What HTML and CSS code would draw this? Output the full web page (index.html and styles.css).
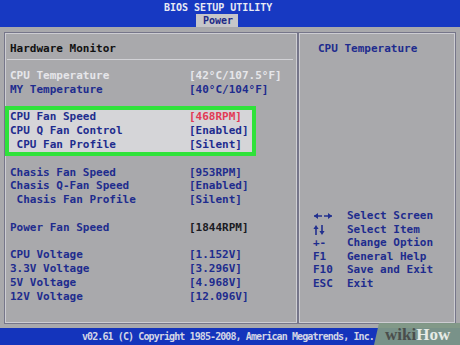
FILE: index.html
```html
<!DOCTYPE html>
<html>
<head>
<meta charset="utf-8">
<link rel="stylesheet" href="styles.css">
</head>
<body>
<div class="screen">
  <header class="topbar">
    <div class="title">BIOS SETUP UTILITY</div>
    <div class="tabs"><span class="tab">Power</span></div>
  </header>
  <main class="frame">
    <section class="panel left">
      <div class="heading">Hardware Monitor</div>
      <div class="sep"></div>
      <div class="row disabled"><span>CPU Temperature</span><span>[42°C/107.5°F]</span></div>
      <div class="row"><span>MY Temperature</span><span>[40°C/104°F]</span></div>
      <div class="blank short"></div>
      <div class="box">
        <div class="row sel"><span>CPU Fan Speed</span><span class="red">[468RPM]</span></div>
        <div class="row"><span>CPU Q Fan Control</span><span>[Enabled]</span></div>
        <div class="row"><span class="indent">CPU Fan Profile</span><span>[Silent]</span></div>
      </div>
      <div class="blank short"></div>
      <div class="row"><span>Chasis Fan Speed</span><span>[953RPM]</span></div>
      <div class="row"><span>Chasis Q-Fan Speed</span><span>[Enabled]</span></div>
      <div class="row"><span class="indent">Chasis Fan Profile</span><span>[Silent]</span></div>
      <div class="blank"></div>
      <div class="row"><span>Power Fan Speed</span><span class="dark">[1844RPM]</span></div>
      <div class="blank"></div>
      <div class="row"><span>CPU Voltage</span><span>[1.152V]</span></div>
      <div class="row"><span>3.3V Voltage</span><span>[3.296V]</span></div>
      <div class="row"><span>5V Voltage</span><span>[4.968V]</span></div>
      <div class="row"><span>12V Voltage</span><span>[12.096V]</span></div>
    </section>
    <aside class="panel right">
      <div class="help-title">CPU Temperature</div>
      <div class="keys">
        <div class="key-row"><span class="key"><svg width="20" height="8" viewBox="0 0 20 8"><path d="M1 4h8M11 4h8" stroke="#22308f" stroke-width="1.6"/><path d="M1 4l4-3v6z M19 4l-4-3v6z" fill="#22308f"/></svg></span><span>Select Screen</span></div>
        <div class="key-row"><span class="key"><svg width="12" height="10" viewBox="0 0 12 10"><path d="M3 2v8M9 0v8" stroke="#22308f" stroke-width="1.6"/><path d="M3 0l-2.6 4h5.2z M9 10l-2.6-4h5.2z" fill="#22308f"/></svg></span><span>Select Item</span></div>
        <div class="key-row"><span class="key">+-</span><span>Change Option</span></div>
        <div class="key-row"><span class="key">F1</span><span>General Help</span></div>
        <div class="key-row"><span class="key">F10</span><span>Save and Exit</span></div>
        <div class="key-row"><span class="key">ESC</span><span>Exit</span></div>
      </div>
    </aside>
  </main>
  <footer class="footer">v02.61 (C) Copyright 1985-2008, American Megatrends, Inc.</footer>
  <div class="wikihow"><span class="wiki">wiki</span><span class="how">How</span></div>
</div>
</body>
</html>
```
FILE: styles.css
```css
body {
  margin: 0;
  width: 460px;
  height: 345px;
  overflow: hidden;
  background: #a9a9ac;
  font-family: "DejaVu Sans Mono", "Liberation Mono", monospace;
  font-weight: bold;
  font-size: 11px;
}

.screen {
  position: relative;
  height: 345px;
  display: flex;
  flex-direction: column;
}

.topbar {
  height: 27px;
  background: #1739c2;
  flex: none;
}

.title {
  height: 14px;
  line-height: 16px;
  padding-left: 164px;
  font-size: 10px;
  color: #e8eaf4;
}

.tabs {
  height: 13px;
  padding-left: 196px;
}

.tab {
  display: inline-block;
  height: 13px;
  line-height: 14px;
  padding: 0 5px 0 7px;
  font-size: 10px;
  background: #c6c6c9;
  color: #1d2a86;
}

.frame {
  display: flex;
  margin: 5px 4px 0;
  height: 292px;
  flex: none;
}

.panel {
  box-sizing: border-box;
  border: 1px solid #76768a;
  box-shadow: inset 0 0 0 1px #cdcdd2;
  color: #1e2c8e;
}

.left {
  width: 294px;
}

.right {
  flex: 1;
  display: flex;
  flex-direction: column;
}

.heading {
  margin-top: 9px;
  padding-left: 5px;
  line-height: 14px;
  height: 14px;
  color: #111;
}

.sep {
  height: 1px;
  margin: 3px 4px 0 2px;
  background: #d2d2d6;
}

.sep + .row {
  margin-top: 9px;
}

.row {
  display: grid;
  grid-template-columns: 179px auto;
  padding-left: 5px;
  height: 13.8px;
  line-height: 13.8px;
  white-space: nowrap;
}

.row.disabled {
  color: #e6e6ea;
}

.indent {
  padding-left: 1ch;
}

.blank {
  height: 13.8px;
}

.blank.short {
  height: 9.8px;
}

.box {
  box-sizing: border-box;
  width: 251px;
  border: 4px solid #2fe23a;
  background: #d5d5d8;
}

.box .row {
  padding-left: 1px;
}

.red {
  color: #e23a55;
}

.dark {
  color: #1a1a22;
}

.help-title {
  margin-top: 9px;
  padding-left: 19px;
  line-height: 14px;
  height: 14px;
}

.keys {
  margin-top: auto;
  margin-bottom: 32.7px;
  padding-left: 14px;
}

.key-row {
  display: grid;
  grid-template-columns: 34px auto;
  height: 13.5px;
  line-height: 13.5px;
  white-space: nowrap;
}

.key {
  display: flex;
  align-items: center;
}

.footer {
  margin-top: 4px;
  height: 17px;
  line-height: 18px;
  background: #1434bc;
  color: #d2d5e6;
  font-size: 10px;
  letter-spacing: -0.9px;
  padding-left: 82px;
  white-space: nowrap;
  flex: none;
}

.wikihow {
  position: absolute;
  right: 0;
  bottom: 0;
  width: 86px;
  height: 22px;
  background: rgba(128, 152, 134, 0.94);
  clip-path: polygon(5px 0, 100% 0, 100% 100%, 0 100%);
  font-family: "Liberation Serif", "DejaVu Serif", serif;
  font-size: 17px;
  font-weight: bold;
  line-height: 24px;
  padding-left: 11px;
  box-sizing: border-box;
  white-space: nowrap;
}

.wiki {
  color: #4a4e4c;
}

.how {
  color: #e6ebe6;
}
```
